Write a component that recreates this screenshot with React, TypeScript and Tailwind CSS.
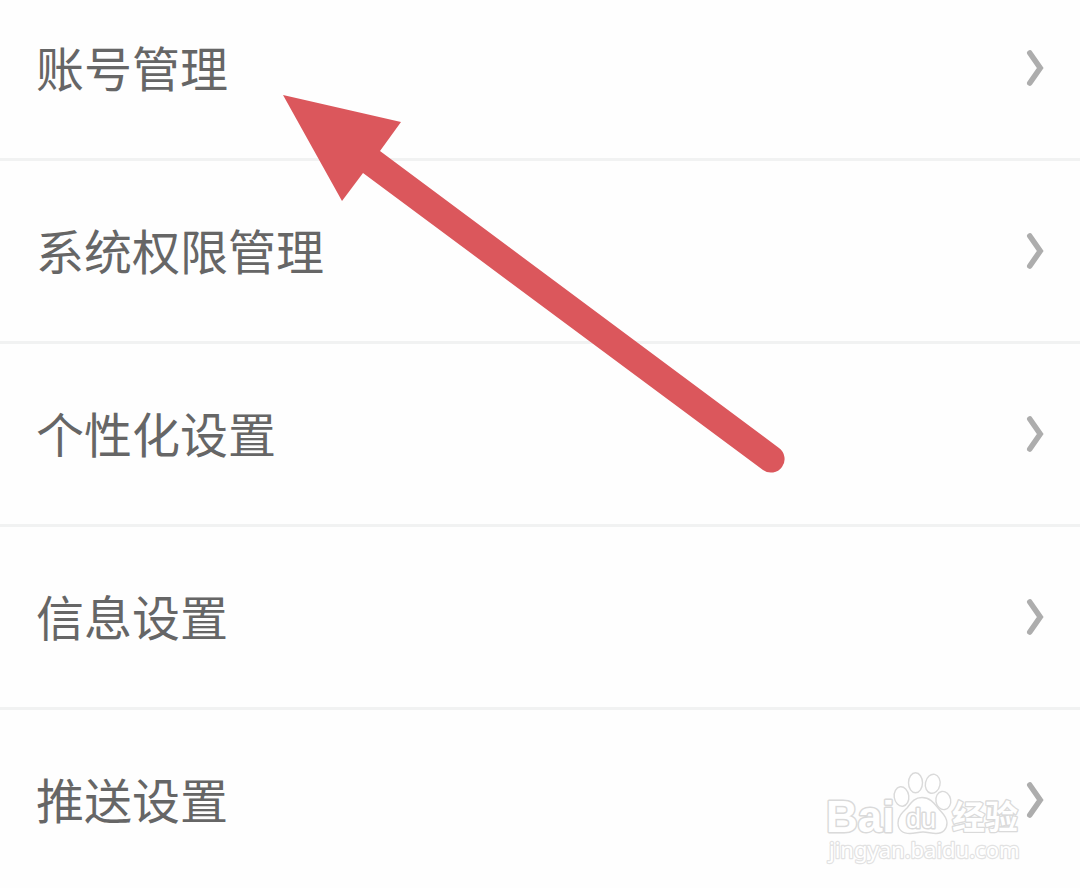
// App.tsx
const items = ['账号管理', '系统权限管理', '个性化设置', '信息设置', '推送设置'];

function Chevron() {
  return (
    <svg className="h-9 w-5 shrink-0" viewBox="0 0 20 36" fill="none" aria-hidden="true">
      <path d="M5.8 3 L16.2 18 L5.8 33" stroke="#adadad" strokeWidth="5.6" strokeLinecap="round" />
    </svg>
  );
}

function Arrow() {
  return (
    <svg
      className="pointer-events-none absolute top-[90px] left-[280px] h-[390px] w-[510px]"
      viewBox="280 90 510 390"
      aria-hidden="true"
    >
      <path
        d="M283 95 L401 122 L380 151 L779 448 A13.6 13.6 0 0 1 763 470 L363 173 L342 201 Z"
        fill="#db575c"
      />
    </svg>
  );
}

function Watermark() {
  return (
    <svg
      className="pointer-events-none absolute right-[50px] bottom-4 h-[112px] w-[210px]"
      viewBox="820 760 210 112"
      fill="#ffffff"
      stroke="#dadada"
      strokeWidth="1.4"
      strokeLinejoin="round"
      fontFamily='"Noto Sans", "Noto Sans CJK SC", sans-serif'
      aria-label="Baidu 经验"
    >
      <text
        x="826"
        y="832"
        fontSize="44"
        fontWeight="700"
        fontFamily='"Liberation Sans", sans-serif'
        paintOrder="stroke"
        strokeWidth="3"
      >
        Bai
      </text>
      <ellipse cx="901.5" cy="796.5" rx="7.3" ry="9.8" transform="rotate(-8 901.5 796.5)" />
      <ellipse cx="915.5" cy="782.8" rx="7" ry="10" />
      <ellipse cx="932.7" cy="783.8" rx="7.3" ry="9.6" transform="rotate(12 932.7 783.8)" />
      <ellipse cx="943.3" cy="800.5" rx="7.4" ry="9.2" transform="rotate(-10 943.3 800.5)" />
      <path d="M922 797.5 C914 797.5 911 803 907 808 C903 812 898 816 898 823 C898 830 903 833.5 910 833.5 C915 833.5 918 832 923 832 C928 832 931 833.5 936 833.5 C943 833.5 947 829 947 823 C947 816 942 813 938 808 C934 803 930 797.5 922 797.5 Z" />
      <text
        x="906"
        y="828"
        fontSize="27"
        fontFamily='"Liberation Sans", sans-serif'
        paintOrder="stroke"
        strokeWidth="3"
      >
        du
      </text>
      <text x="952" y="829" fontSize="33" fontWeight="700" paintOrder="stroke" strokeWidth="2.6">
        经验
      </text>
      <text x="829" y="858" fontSize="22" paintOrder="stroke" stroke="#e2e2e2" strokeWidth="2.4">
        jingyan.baidu.com
      </text>
    </svg>
  );
}

export default function App() {
  return (
    <main className="relative min-h-screen bg-[#fefefe] font-['Noto_Sans_CJK_SC',sans-serif]">
      <ul>
        {items.map((item) => (
          <li
            key={item}
            className="border-b-[3px] border-[#f1f2f2] first:[&>button]:pt-[42px] last:border-b-0 last:[&>button]:pb-[62px]"
          >
            <button
              type="button"
              className="flex w-full items-center justify-between px-9 py-16 text-left text-[48px] leading-[48px] text-[#666666]"
            >
              <span className="pb-1">{item}</span>
              <Chevron />
            </button>
          </li>
        ))}
      </ul>
      <Arrow />
      <Watermark />
    </main>
  );
}
